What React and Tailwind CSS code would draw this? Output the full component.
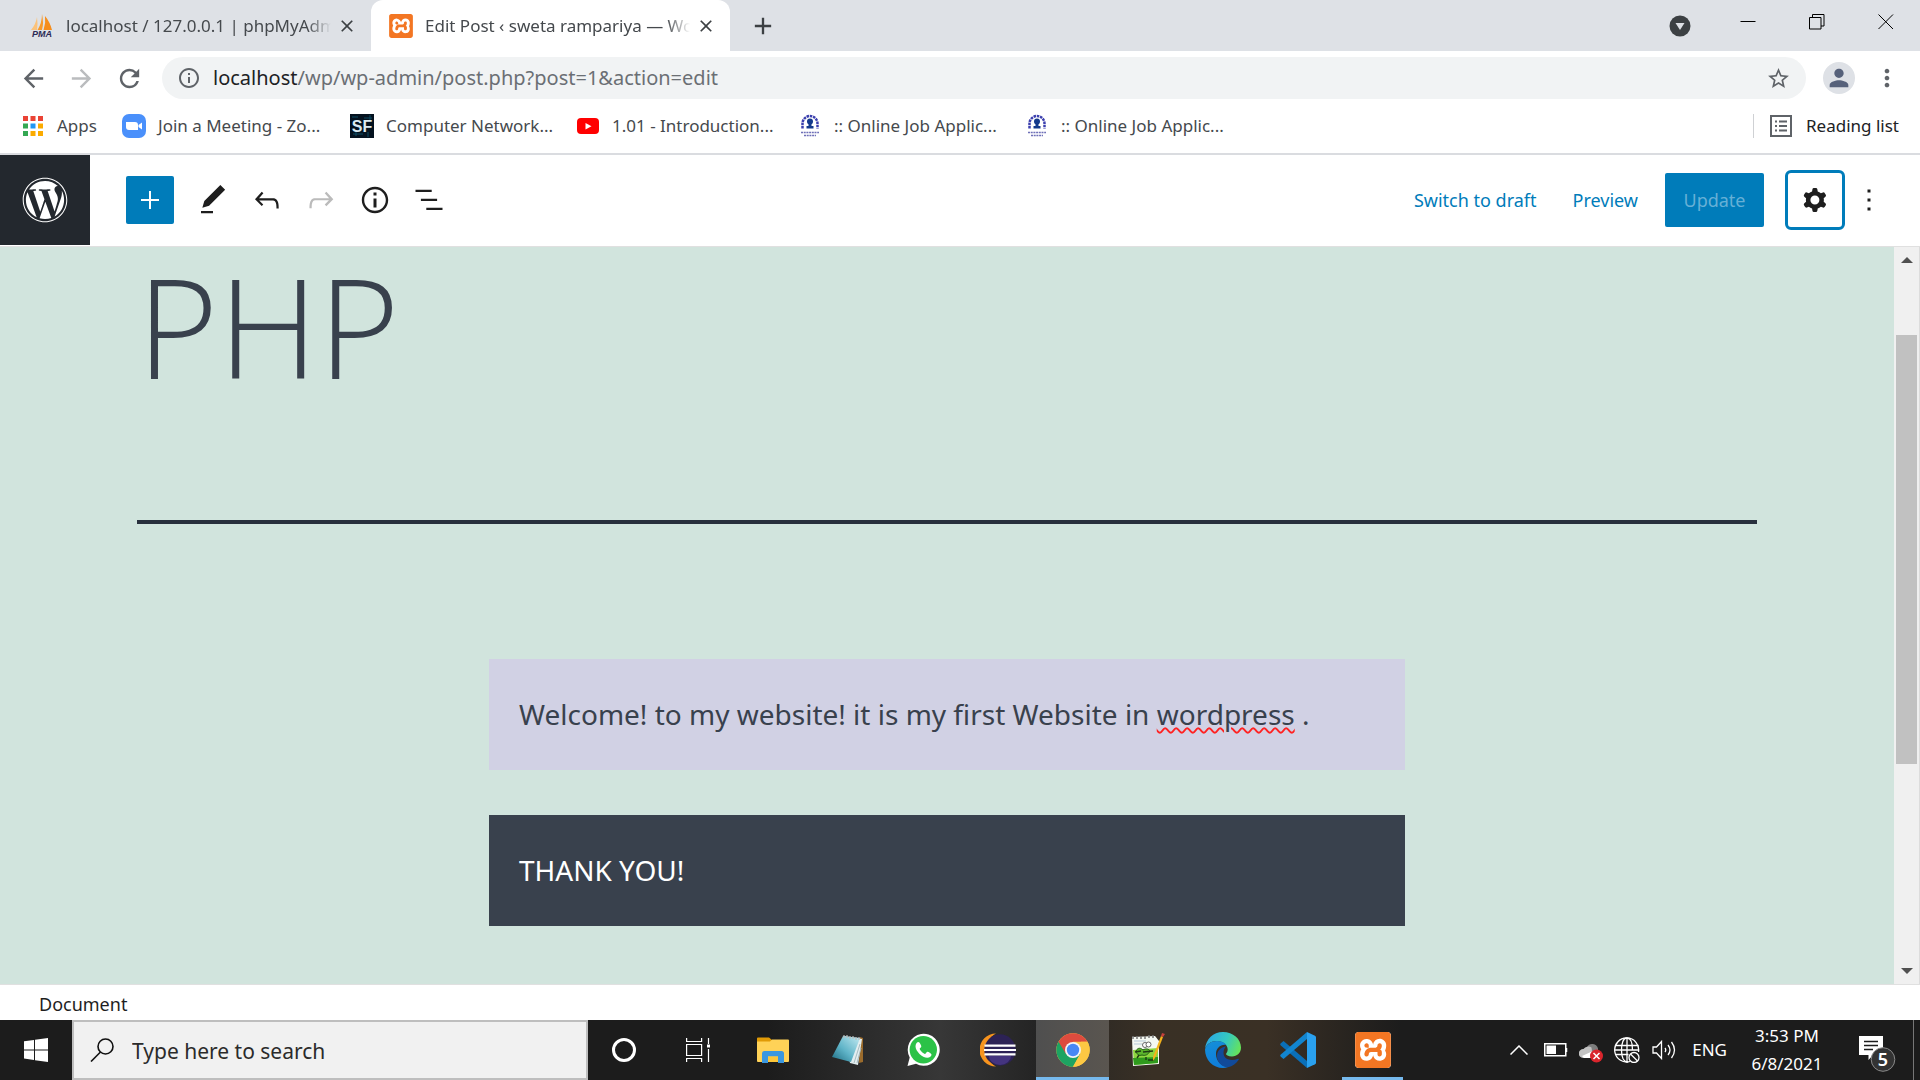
import React from "react";
import {
  MdArrowBack,
  MdArrowForward,
  MdRefresh,
  MdInfoOutline,
  MdStarBorder,
  MdMoreVert,
  MdPerson,
  MdClose,
  MdAdd,
} from "react-icons/md";
import { FaWordpress } from "react-icons/fa";
import { SiXampp } from "react-icons/si";

/* ---------- shared icons ---------- */

function BlockIcon({ d, className = "" }) {
  return (
    <svg viewBox="0 0 24 24" className={`size-9 ${className}`} fill="currentColor" aria-hidden="true">
      <path fillRule="evenodd" clipRule="evenodd" d={d} />
    </svg>
  );
}

function XamppIcon({ className }) {
  return (
    <span className={`block rounded-sm bg-white text-[#f37623] ${className}`}>
      <SiXampp className="size-full" />
    </span>
  );
}

function PmaIcon() {
  return (
    <svg viewBox="0 0 24 24" className="size-6 shrink-0" aria-hidden="true">
      <path d="M7 3 Q8 10 7 16 L1 16 Q6 10 7 3Z" fill="#fbc27a" />
      <path d="M12 0 Q14 9 12 16 L7.500 16 Q12 9 12 0Z" fill="#f79a2b" />
      <path d="M15 2 Q20 8 22 16 L13.500 16 Q16 9 15 2Z" fill="#f58d1c" />
      <text x="12" y="23" textAnchor="middle" fontFamily="Liberation Sans" fontSize="9" fontWeight="700" fontStyle="italic" fill="#2c2a55">
        PMA
      </text>
    </svg>
  );
}

function AppsIcon() {
  const colors = ["#ea4335", "#ea4335", "#ea4335", "#34a853", "#2196f3", "#fbab00", "#34a853", "#fbab00", "#fbab00"];
  return (
    <svg viewBox="0 0 20 20" className="size-5" aria-hidden="true">
      {colors.map((c, i) => (
        <rect key={i} x={(i % 3) * 7.5} y={Math.floor(i / 3) * 7.5} width="5" height="5" fill={c} />
      ))}
    </svg>
  );
}

function ZoomIcon() {
  return (
    <svg viewBox="0 0 24 24" className="size-6" aria-hidden="true">
      <rect width="24" height="24" rx="7" fill="#4a90fb" />
      <path d="M4 8h9a3 3 0 0 1 3 3v5H7a3 3 0 0 1-3-3z" fill="#fff" />
      <path d="M16.500 11l3.500-2.500v7L16.500 13z" fill="#fff" />
    </svg>
  );
}

function SfIcon() {
  return (
    <svg viewBox="0 0 24 24" className="size-6" aria-hidden="true">
      <rect width="24" height="24" fill="#04121f" />
      <path d="M2 3h6M14 4h8M3 20h10M18 18v5M6 17v5M20 1v6" stroke="#0d4a63" strokeWidth="1" />
      <text x="12" y="17.500" textAnchor="middle" fontFamily="Liberation Sans" fontSize="16" fontWeight="700" fill="#dcebf2">
        SF
      </text>
    </svg>
  );
}

function YoutubeIcon() {
  return (
    <svg viewBox="0 0 24 24" className="size-6" aria-hidden="true">
      <rect x="1" y="4" width="22" height="16" rx="4" fill="#f00" />
      <path d="M9.500 9v6.500l6-3.250z" fill="#fff" />
    </svg>
  );
}

function JobIcon() {
  return (
    <svg viewBox="0 0 24 24" className="size-6" aria-hidden="true">
      <path d="M4.500 14.500V9.500a7.500 7.500 0 0 1 15 0v5" fill="none" stroke="#3b3fae" strokeWidth="2.500" strokeDasharray="2.500 .8" />
      <circle cx="12" cy="7.500" r="3" fill="#143a8c" />
      <path d="M10.500 9h3v3h2v2.500h-7V12h2z" fill="#143a8c" />
      <path d="M3 18.500h18M6 21.500h12" stroke="#6f70b8" strokeWidth="1.500" strokeDasharray="2 .7" />
    </svg>
  );
}

/* ---------- browser chrome ---------- */

function Tab({ icon, title, active }) {
  return (
    <div
      className={`flex h-[51px] items-center pr-2 ${
        active ? "w-[359px] rounded-t-xl bg-white pl-[18px]" : "w-[371px] pl-[30px]"
      }`}
    >
      {icon}
      <span className="ml-3 min-w-0 flex-1 overflow-hidden mask-r-from-91% text-[17px] leading-6 whitespace-nowrap text-[#45494d]">
        {title}
      </span>
      <button type="button" aria-label="Close tab" className="flex size-8 items-center justify-center text-[#3c4043]">
        <MdClose className="size-5" />
      </button>
    </div>
  );
}

function TabStrip() {
  return (
    <div className="flex h-[51px] bg-[#dee1e6]">
      <Tab icon={<PmaIcon />} title="localhost / 127.0.0.1 | phpMyAdm" />
      <Tab active icon={<XamppIcon className="size-6 shrink-0" />} title="Edit Post ‹ sweta rampariya — Wo" />
      <button type="button" aria-label="New tab" className="ml-[18px] flex w-[30px] items-center justify-center text-[#3c4043]">
        <MdAdd className="size-7" />
      </button>
      <div className="ml-auto flex">
        <button type="button" aria-label="Search tabs" className="flex w-[66px] items-center justify-center">
          <svg viewBox="0 0 22 22" className="size-[22px]" aria-hidden="true">
            <circle cx="11" cy="11" r="10.500" fill="#3c4043" />
            <path d="M6.500 8h9L11 15z" fill="#dee1e6" />
          </svg>
        </button>
        {[
          ["Minimize", "M.5 7.500h15"],
          ["Restore", "M.5 3.500h11.500v11.500H.5zM3.500 3.500v-3h11.500v11.500h-3"],
          ["Close", "M.5.5l14.500 14.500M15 .5L.5 15"],
        ].map(([label, d]) => (
          <button key={label} type="button" aria-label={label} className="flex h-[43px] w-[69px] items-center justify-center">
            <svg viewBox="0 0 16 16" className="size-4" fill="none" stroke="#000" aria-hidden="true">
              <path d={d} />
            </svg>
          </button>
        ))}
      </div>
    </div>
  );
}

function AddressBar() {
  return (
    <div className="flex h-[54px] items-center bg-white px-[9px] text-[#5f6368]">
      <button type="button" aria-label="Back" className="flex size-12 items-center justify-center">
        <MdArrowBack className="size-[29px]" />
      </button>
      <button type="button" aria-label="Forward" className="flex size-12 items-center justify-center text-[#babcbe]">
        <MdArrowForward className="size-[29px]" />
      </button>
      <button type="button" aria-label="Reload" className="flex size-12 items-center justify-center">
        <MdRefresh className="size-[29px]" />
      </button>
      <div className="ml-[9px] flex h-[42px] flex-1 items-center rounded-full bg-[#f1f3f4] px-[15px]">
        <MdInfoOutline className="size-6" />
        <a href="#post" className="ml-3 text-[20px] leading-7 text-[#6b6f74]">
          <span className="text-[#202124]">localhost</span>/wp/wp-admin/post.php?post=1&amp;action=edit
        </a>
        <button type="button" aria-label="Bookmark this page" className="ml-auto">
          <MdStarBorder className="size-[25px]" />
        </button>
      </div>
      <button type="button" aria-label="Profile" className="ml-[17px] flex size-8 items-center justify-center rounded-full bg-[#dee1e6] text-[#56617a]">
        <MdPerson className="size-7" />
      </button>
      <button type="button" aria-label="Menu" className="ml-2 flex size-12 items-center justify-center">
        <MdMoreVert className="size-7" />
      </button>
    </div>
  );
}

function Bookmark({ icon, label, className }) {
  return (
    <a href="#bookmark" className={`flex items-center whitespace-nowrap ${className}`}>
      <span className="mr-3 flex size-6 items-center justify-center">{icon}</span>
      {label}
    </a>
  );
}

function BookmarksBar() {
  return (
    <nav className="flex h-[50px] items-center border-b-2 border-[#dadce0] bg-white px-[21px] pb-[6px] text-[17px] leading-6 text-[#45494d]">
      <Bookmark className="w-[101px]" icon={<AppsIcon />} label="Apps" />
      <Bookmark className="w-[228px]" icon={<ZoomIcon />} label="Join a Meeting - Zo..." />
      <Bookmark className="w-[226px]" icon={<SfIcon />} label="Computer Network..." />
      <Bookmark className="w-[222px]" icon={<YoutubeIcon />} label="1.01 - Introduction..." />
      <Bookmark className="w-[227px]" icon={<JobIcon />} label=":: Online Job Applic..." />
      <Bookmark className="w-[227px]" icon={<JobIcon />} label=":: Online Job Applic..." />
      <button type="button" className="ml-auto flex items-center border-l border-[#cfd1d4] pl-4 text-[#202124]">
        <svg viewBox="0 0 22 22" className="mr-[14px] size-[22px]" fill="none" stroke="#5f6368" strokeWidth="2" aria-hidden="true">
          <rect x="1" y="1" width="20" height="20" />
          <path d="M5 6.500h2M5 11h2M5 15.500h2M9 6.500h8M9 11h8M9 15.500h8" />
        </svg>
        Reading list
      </button>
    </nav>
  );
}

/* ---------- WordPress editor ---------- */

const TOOLS = [
  ["Edit", "M20.1 5.1L16.9 2 6.2 12.7l-1.3 4.4 4.5-1.3L20.1 5.1zM4 20.8h8v-1.5H4v1.5z"],
  ["Undo", "M18.3 11.7c-.6-.6-1.4-.9-2.3-.9H6.7l2.9-3.3-1.1-1-4.5 5L8.500 16l1-1-2.7-2.700H16c.5 0 .9.2 1.3.5 1 1 1 3.400 1 4.500v.3h1.500v-.2c0-1.500 0-4.300-1.500-5.700z"],
  ["Redo", "M15.6 6.500l-1.1 1 2.9 3.300H8c-.9 0-1.700.3-2.300.9-1.400 1.500-1.400 4.200-1.400 5.600v.2h1.500v-.3c0-1.100 0-3.500 1-4.500.3-.3.7-.5 1.300-.5h9.200L14.500 15l1.100 1.100 4.600-4.600-4.600-5z"],
  ["Details", "M12 3.200c-4.800 0-8.800 3.900-8.800 8.800 0 4.800 3.900 8.800 8.800 8.800 4.800 0 8.800-3.900 8.800-8.800 0-4.800-4-8.800-8.800-8.800zm0 16c-4 0-7.200-3.300-7.200-7.200C4.800 8 8 4.800 12 4.800s7.200 3.300 7.200 7.200c0 4-3.200 7.200-7.200 7.200zM11 17h2v-6h-2v6zm0-8h2V7h-2v2z"],
  ["List view", "M13.8 5.200H3v1.500h10.800V5.200zm-3.600 12v1.500H21v-1.500H10.200zm7.200-6H6.600v1.500h10.800v-1.500z"],
];

const GEAR =
  "M10.289 4.836A1 1 0 0111.275 4h1.306a1 1 0 01.987.836l.244 1.466c.787.26 1.503.679 2.108 1.218l1.393-.522a1 1 0 011.216.437l.653 1.13a1 1 0 01-.23 1.273l-1.148.944a6.025 6.025 0 010 2.435l1.149.946a1 1 0 01.23 1.272l-.653 1.13a1 1 0 01-1.216.437l-1.394-.522c-.605.54-1.32.958-2.108 1.218l-.244 1.466a1 1 0 01-.987.836h-1.306a1 1 0 01-.986-.836l-.244-1.466a5.995 5.995 0 01-2.108-1.218l-1.394.522a1 1 0 01-1.217-.436l-.653-1.131a1 1 0 01.23-1.272l1.149-.946a6.026 6.026 0 010-2.435l-1.148-.944a1 1 0 01-.23-1.272l.653-1.131a1 1 0 011.217-.437l1.393.522a5.994 5.994 0 012.108-1.218l.244-1.466zM14.929 12a3 3 0 11-6 0 3 3 0 016 0z";

function EditorHeader() {
  return (
    <header className="flex h-[92px] items-center border-b border-[#e0e0e0] bg-white pb-px text-[#1e1e1e]">
      <a href="#posts" aria-label="View posts" className="flex size-[90px] items-center justify-center bg-[#23282e] text-white">
        <FaWordpress className="size-[46px]" />
      </a>
      <button type="button" aria-label="Add block" className="mr-3 ml-9 flex size-12 items-center justify-center rounded-xs bg-[#007cba] text-white">
        <svg viewBox="0 0 18 18" className="size-[18px]" aria-hidden="true">
          <path d="M9 0v18M0 9h18" stroke="currentColor" strokeWidth="2" />
        </svg>
      </button>
      {TOOLS.map(([label, d]) => (
        <button key={label} type="button" aria-label={label} className="flex size-[54px] items-center justify-center">
          <BlockIcon d={d} className={label === "Redo" ? "text-[#bbbbbb]" : ""} />
        </button>
      ))}
      <div className="ml-auto flex items-center text-[18px] leading-6 text-[#007cba]">
        <button type="button" className="px-[18px]">Switch to draft</button>
        <button type="button" className="px-[18px]">Preview</button>
        <button type="button" className="ml-[9px] h-[54px] w-[99px] rounded-xs bg-[#007cba] text-[#66b0d6]">Update</button>
        <button type="button" aria-label="Settings" className="ml-[21px] flex size-[60px] items-center justify-center rounded-md border-3 border-[#007cba] text-[#1e1e1e]">
          <BlockIcon d={GEAR} />
        </button>
        <button type="button" aria-label="Options" className="mr-[27px] flex h-[54px] w-12 items-center justify-center text-[#1e1e1e]">
          <BlockIcon d="M13 19h-2v-2h2v2zm0-6h-2v-2h2v2zm0-6h-2V5h2v2z" />
        </button>
      </div>
    </header>
  );
}

function Scrollbar() {
  return (
    <div className="flex w-[26px] shrink-0 flex-col items-center border-r border-[#dcdcdc] bg-[#f0f0f0] py-[10px]" aria-hidden="true">
      <svg viewBox="0 0 12 6" className="h-[6px] w-3"><path d="M6 0l6 6H0z" fill="#505050" /></svg>
      <div className="grow-[72]" />
      <div className="w-[21px] grow-[429] bg-[#c1c1c1]" />
      <div className="grow-[204]" />
      <svg viewBox="0 0 12 6" className="h-[6px] w-3"><path d="M6 6l6-6H0z" fill="#505050" /></svg>
    </div>
  );
}

function Editor() {
  return (
    <div className="flex flex-1 border-b border-[#e0e0e0]">
      <main className="min-w-0 flex-1 bg-[#d1e4dd] text-[#39414d]">
        <article className="mx-[137px]">
          <h1 className="font-['Open_Sans',sans-serif] text-[139px] leading-[156px] font-light">PHP</h1>
          <hr className="mt-[117px] border-t-4 border-[#28303d]" />
          <div className="mx-auto mt-[135px] flex max-w-[916px] flex-col gap-[45px] text-[28px] leading-[51px]">
            <p className="bg-[#d1d1e4] p-[30px]">
              Welcome! to my website! it is my first Website in{" "}
              <span className="underline decoration-[#f22] decoration-wavy decoration-2 underline-offset-2">wordpress</span> .
            </p>
            <p className="bg-[#39414d] p-[30px] text-white">THANK YOU!</p>
          </div>
        </article>
      </main>
      <Scrollbar />
    </div>
  );
}

/* ---------- taskbar ---------- */

function FolderIcon() {
  return (
    <svg viewBox="0 0 36 36" className="size-9" aria-hidden="true">
      <path d="M2 6.500a1 1 0 0 1 1-1h11l3 2.500v5H2z" fill="#e09a06" />
      <path d="M2 9.500h13l2-2h16a1 1 0 0 1 1 1V29a1 1 0 0 1-1 1H3a1 1 0 0 1-1-1z" fill="#ffd257" />
      <path d="M7 31V21.500a2.500 2.500 0 0 1 2.500-2.500h17a2.500 2.500 0 0 1 2.500 2.500V31h-6v-6.500H13V31z" fill="#3a97e0" />
      <path d="M13 30v-5.500h10V30z" fill="#fcc63a" />
    </svg>
  );
}

function NotepadIcon() {
  return (
    <svg viewBox="0 0 36 36" className="size-9" aria-hidden="true">
      <defs>
        <linearGradient id="note" x1="1" y1="0" x2="0" y2="1">
          <stop offset="0" stopColor="#c4eaf2" />
          <stop offset=".55" stopColor="#5fb4c8" />
          <stop offset="1" stopColor="#1c6a80" />
        </linearGradient>
      </defs>
      <path d="M30 5l3 1v24l-4 1z" fill="#9a6b2c" />
      <path d="M14 4l18 3-4 26-8-2z" fill="#e3eef0" />
      <path d="M30 12l-6 19M31 16l-4 15" stroke="#a9bcc0" strokeWidth="1" />
      <path d="M13 4l17 2-9 24L2 25z" fill="url(#note)" />
      <path d="M14 3v3M17 3v3M20 4v3M23 4v3M26 5v3M29 5v3" stroke="#b9b9b9" strokeWidth="1.200" />
    </svg>
  );
}

function WhatsappIcon() {
  return (
    <svg viewBox="0 0 36 36" className="size-9" aria-hidden="true">
      <path d="M2.500 34l2.200-8.500A16 16 0 1 1 11 31.800z" fill="#fff" />
      <circle cx="18.300" cy="17.700" r="13.700" fill="#2bc247" />
      <path d="M13.200 10c-.8 0-2.700 1.500-2.700 4.200 0 5 6.800 11.600 11.800 11.600 2.500 0 4.200-1.500 4.200-3.200 0-1-3.300-2.800-4-2.800-1 0-1.500 2.200-2.500 2.200-1.200 0-5.300-3.800-5.300-5.200 0-.8 1.600-1.400 1.600-2.400 0-.8-1.400-4.400-3.100-4.400z" fill="#fff" />
    </svg>
  );
}

function EclipseIcon() {
  return (
    <svg viewBox="0 0 36 36" className="size-9" aria-hidden="true">
      <path d="M16 1.500a16.500 16.500 0 0 0 0 33c-12-5-12-28 0-33z" fill="#f7941e" />
      <circle cx="20" cy="18" r="15.700" fill="#2c2255" />
      <path d="M9 24h22a11 9 0 0 1-22 0z" fill="#44347f" />
      <path d="M4.500 13.700h31M4 18h32M4.500 22.300h31" stroke="#fff" strokeWidth="2.200" />
    </svg>
  );
}

function ChromeIcon() {
  return (
    <svg viewBox="0 0 36 36" className="size-9" aria-hidden="true">
      <circle cx="18" cy="18" r="16.700" fill="#fdc843" />
      <path d="M3.540 9.650A16.700 16.700 0 0 0 18 34.700l7.200-12.700-7.200-4z" fill="#1da462" />
      <path d="M3.540 9.650A16.700 16.700 0 0 1 32.460 9.650H18L11 22z" fill="#dd4b3e" />
      <path d="M18 34.700l7.200-12.700L26 9.650h6.460A16.700 16.700 0 0 1 18 34.700z" fill="#fdc843" />
      <circle cx="18" cy="18" r="8" fill="#f4f4f4" />
      <circle cx="18" cy="18" r="6.200" fill="#4688f4" />
    </svg>
  );
}

function NotepadPlusIcon() {
  return (
    <svg viewBox="0 0 36 36" className="size-9" aria-hidden="true">
      <path d="M2 5l23-1 4 5v23L3 34z" fill="#f4f8f2" />
      <path d="M3 18l25-2v15L4 33z" fill="#8ed63f" />
      <path d="M3 26l25-1v6L4 33z" fill="#2f9a1d" />
      <path d="M4 9h12M4 12h8" stroke="#b5c8d8" strokeWidth="1" />
      <path d="M3 4v3M7 4v3M11 4v3M15 4v3M19 3v3M23 3v3" stroke="#777" strokeWidth="1.500" />
      <path d="M6 19c2-4 5-3 7-1 3-2 6-1 7 1-2 4-5 5-8 4-3 1-5 0-6-4z" fill="#5cb52c" stroke="#1d5a12" strokeWidth="1" />
      <path d="M5 20l6-1M13 20l10-1M9 23l-2 3M16 25v3M18 28h6" stroke="#1f3a14" strokeWidth="1.400" />
      <circle cx="15" cy="13" r="2.500" fill="#fff" stroke="#444" strokeWidth=".8" />
      <circle cx="18.500" cy="12.500" r="2.500" fill="#fff" stroke="#444" strokeWidth=".8" />
      <path d="M33 5l-8 21-2 3v-4L31 4z" fill="#f5b21b" />
      <path d="M31 4l1-3 3 1-2 3z" fill="#c5403c" />
    </svg>
  );
}

function EdgeIcon() {
  return (
    <svg viewBox="0 0 36 36" className="size-9" aria-hidden="true">
      <defs>
        <linearGradient id="edgeTop" x1="0" y1=".3" x2="1" y2=".6">
          <stop offset="0" stopColor="#2aa7e6" />
          <stop offset=".55" stopColor="#35c8c0" />
          <stop offset="1" stopColor="#66e35a" />
        </linearGradient>
        <linearGradient id="edgeBlue" x1="0" y1="0" x2=".3" y2="1">
          <stop offset="0" stopColor="#1590d8" />
          <stop offset="1" stopColor="#0f7ddb" />
        </linearGradient>
      </defs>
      <path d="M0 17C1 7 8 0 18 0c10 0 18 7 18 15.500C36 21 32 24.500 27 24.500c-4 0-6-1.300-6-2.400 0-.8 1.700-1.600 1.700-4.600C22.700 13 18 9 12 9 6 9 1.500 12 0 17z" fill="url(#edgeTop)" />
      <path d="M0 17.500C1.500 12 6 9 12 9c4 0 7.500 1.500 9.500 4-6-1-10.500 3.500-10.500 9 0 7 5.500 12.500 12 13-1.600.7-3.300 1-5 1C8 36 0 28 0 17.500z" fill="url(#edgeBlue)" />
      <path d="M21 14.500c-5 .5-9 4-9 9.500 0 6 5 11.500 11 11.300 4.500-1 8.500-4 10.700-7.500.4-.7-.2-1.300-.8-1-6.500 2.800-14.400.8-14.400-6 0-2.500 1-4.700 2.500-6.300z" fill="#114a9a" />
    </svg>
  );
}

function CodeIcon() {
  return (
    <svg viewBox="0 0 36 36" className="size-9" aria-hidden="true">
      <path d="M3.500 9L27 29v7L.8 13.500a1.500 1.500 0 0 1 0-2.200z" fill="#0a6fb8" />
      <path d="M3.500 27L27 7V0L.8 22.500a1.500 1.500 0 0 0 0 2.200z" fill="#1285cf" />
      <path d="M27 0l8 3.700a1.800 1.800 0 0 1 1 1.600v25.400a1.800 1.800 0 0 1-1 1.600L27 36z" fill="#2aa1ef" />
    </svg>
  );
}

function TaskButton({ label, children, state = "" }) {
  return (
    <button type="button" aria-label={label} className="relative flex w-[75px] items-center justify-center">
      {state === "active" && <span className="absolute inset-x-px inset-y-0 border-b-3 border-[#76b9ed] bg-white/20" />}
      {state === "open" && <span className="absolute inset-x-[7px] bottom-0 h-[3px] bg-[#76b9ed]" />}
      <span className="relative flex">{children}</span>
    </button>
  );
}

function Tray() {
  return (
    <div className="ml-auto flex items-center">
      <svg viewBox="0 0 18 10" className="h-[10px] w-[18px]" fill="none" stroke="#fff" strokeWidth="1.500" aria-hidden="true">
        <path d="M.5 9.500L9 1l8.500 8.500" />
      </svg>
      <svg viewBox="0 0 24 14" className="ml-4 h-[14px] w-6" aria-hidden="true">
        <path d="M.75 .75h21v12h-21zM22.500 5v4" fill="none" stroke="#fff" strokeWidth="1.500" />
        <path d="M2.500 2.500h9.500v8.500H2.500z" fill="#fff" />
      </svg>
      <svg viewBox="0 0 24 22" className="mt-1 ml-[11px] h-[22px] w-6" aria-hidden="true">
        <path d="M8 6a6 6 0 0 1 11 1.500v7H9z" fill="#7d7d7d" />
        <path d="M4 17a4.500 4.500 0 0 1 .5-9 6 6 0 0 1 8-1.500L14 17z" fill="#c2c2c2" />
        <path d="M3 15l11-5v7H5z" fill="#fff" />
        <circle cx="17.500" cy="15" r="6.500" fill="#d9252c" />
        <path d="M14.500 12l6 6M20.500 12l-6 6" stroke="#fff" strokeWidth="1.500" />
      </svg>
      <svg viewBox="0 0 26 26" className="ml-[11px] size-[26px]" fill="none" stroke="#fff" strokeWidth="1.300" aria-hidden="true">
        <path d="M16 24.500A12 12 0 1 1 24.500 15" />
        <path d="M14 25c-5 0-6.500-6-6.500-12S9 1 13 1s5.500 5 5.500 12M1.500 8.500h23M1.500 17.500h13M13 1v24M1 13h24" />
        <circle cx="20" cy="20.500" r="5" fill="#1c1c1c" />
        <path d="M16.500 17l7 7" />
      </svg>
      <svg viewBox="0 0 24 20" className="ml-3 h-5 w-6" fill="none" stroke="#fff" strokeWidth="1.300" aria-hidden="true">
        <path d="M1 7h3.500L9.500 1.500v17L4.500 13H1z" />
        <path d="M13 8q1.500 2 0 4M16 5q4 5 0 10M19.500 2q6 8 0 16" />
      </svg>
      <span className="ml-4 text-[17px]">ENG</span>
      <time className="ml-[22px] flex w-[76px] flex-col items-center text-[17px] leading-7 whitespace-nowrap">
        <span>3:53 PM</span>
        <span>6/8/2021</span>
      </time>
      <button type="button" aria-label="Notifications" className="mt-2 mr-[17px] ml-[33px] flex">
        <svg viewBox="0 0 38 38" className="size-[38px]" aria-hidden="true">
          <path d="M1 1h24v19H15l-4.500 5V20H1z" fill="#fff" />
          <path d="M6 6.500h14M6 10.500h14M6 14.500h9" stroke="#1c1c1c" strokeWidth="1.500" />
          <circle cx="25" cy="24.500" r="11.800" fill="#333" stroke="#8a8a8a" />
          <text x="25" y="31" textAnchor="middle" fontFamily="Noto Sans" fontSize="18" fontWeight="600" fill="#fff">5</text>
        </svg>
      </button>
      <span className="mr-[6px] h-[60px] w-px bg-[#777]" />
    </div>
  );
}

function Taskbar() {
  return (
    <footer className="flex h-[60px] bg-[#1c1c1c] bg-[linear-gradient(90deg,#1c1c1c_0,#1c1c1c_40%,#373737_49%,#242424_54%,#393025_60%,#3a3025_66%,#1c1c1c_73%)] text-white">
      <button type="button" aria-label="Start" className="flex w-[72px] items-center justify-center">
        <svg viewBox="0 0 24 24" className="size-6" fill="#fff" aria-hidden="true">
          <path d="M0 3.300l10-1.400v9.500H0zM11 1.700L24 0v11.400H11zM0 12.400h10V22L0 20.600zM11 12.400h13V24l-13-1.800z" />
        </svg>
      </button>
      <label className="flex w-[516px] items-center border-2 border-[#bebebe] bg-[#f1f1f1] pl-4 text-[#222]">
        <svg viewBox="0 0 24 24" className="size-6" fill="none" stroke="#111" strokeWidth="1.600" aria-hidden="true">
          <circle cx="15.500" cy="8.500" r="7.500" />
          <path d="M10.500 14L1 23.500" />
        </svg>
        <input
          type="text"
          aria-label="Search"
          placeholder="Type here to search"
          className="ml-[18px] min-w-0 flex-1 bg-transparent pt-1 text-[21px] outline-none placeholder:text-[#2b2b2b]"
        />
      </label>
      <button type="button" aria-label="Cortana" className="flex w-[72px] items-center justify-center">
        <span className="size-6 rounded-full border-3 border-white" />
      </button>
      <button type="button" aria-label="Task view" className="flex w-[75px] items-center justify-center">
        <svg viewBox="0 0 24 24" className="size-6" fill="none" stroke="#fff" strokeWidth="1.200" aria-hidden="true">
          <path d="M.6 0v3.500h15V0M.6 24v-3.500h15V24M.6 6.500h15v11H.6zM22.500 0v6M22.500 11v13" />
          <path d="M21 6.500h3v3h-3z" fill="#fff" stroke="none" />
        </svg>
      </button>
      <TaskButton label="File Explorer"><FolderIcon /></TaskButton>
      <TaskButton label="Notepad"><NotepadIcon /></TaskButton>
      <TaskButton label="WhatsApp"><WhatsappIcon /></TaskButton>
      <TaskButton label="Eclipse"><EclipseIcon /></TaskButton>
      <TaskButton label="Chrome" state="active"><ChromeIcon /></TaskButton>
      <TaskButton label="Notepad++"><NotepadPlusIcon /></TaskButton>
      <TaskButton label="Edge"><EdgeIcon /></TaskButton>
      <TaskButton label="Visual Studio Code"><CodeIcon /></TaskButton>
      <TaskButton label="XAMPP" state="open"><XamppIcon className="size-9" /></TaskButton>
      <Tray />
    </footer>
  );
}

export default function App() {
  return (
    <div className="flex min-h-screen flex-col bg-white font-['Noto_Sans','Open_Sans',sans-serif]">
      <TabStrip />
      <AddressBar />
      <BookmarksBar />
      <EditorHeader />
      <Editor />
      <div className="flex h-[35px] items-center pt-1 pl-[39px] text-[18px] text-[#1e1e1e]">Document</div>
      <Taskbar />
    </div>
  );
}
